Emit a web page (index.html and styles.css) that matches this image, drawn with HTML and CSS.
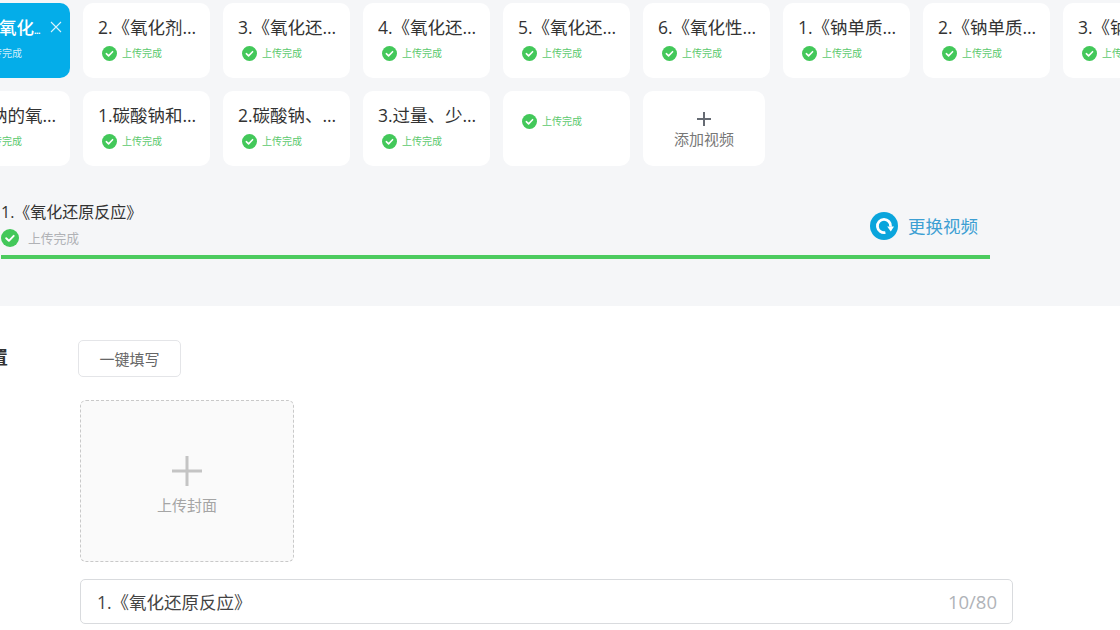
FILE: index.html
```html
<!DOCTYPE html>
<html lang="zh-CN">
<head>
<meta charset="utf-8">
<title>上传视频</title>
<link rel="stylesheet" href="styles.css">
</head>
<body>
<svg class="defs" width="0" height="0" aria-hidden="true">
  <symbol id="ok" viewBox="0 0 16 16">
    <circle cx="8" cy="8" r="8" fill="#43c85a"/>
    <path d="M4.6 8.2l2.4 2.3 4.3-4.4" fill="none" stroke="#fff" stroke-width="1.7" stroke-linecap="round" stroke-linejoin="round"/>
  </symbol>
</svg>
<main class="page">
  <section class="upload-panel">
    <div class="card-grid">
      <div class="card card-active">
        <div class="card-title">1.《氧化<span class="dots">...</span></div>
        <span class="close">
          <svg viewBox="0 0 12 12" width="12" height="12"><path d="M1 1l10 10M11 1L1 11" stroke="#d8f3fd" stroke-width="1.1" fill="none"/></svg>
        </span>
        <div class="card-status"><svg class="ok"><use href="#ok"/></svg><span>上传完成</span></div>
      </div>
      <div class="card"><div class="card-title">2.《氧化剂和还原剂》</div><div class="card-status"><svg class="ok"><use href="#ok"/></svg><span>上传完成</span></div></div>
      <div class="card"><div class="card-title">3.《氧化还原反应的规律》</div><div class="card-status"><svg class="ok"><use href="#ok"/></svg><span>上传完成</span></div></div>
      <div class="card"><div class="card-title">4.《氧化还原反应方程式》</div><div class="card-status"><svg class="ok"><use href="#ok"/></svg><span>上传完成</span></div></div>
      <div class="card"><div class="card-title">5.《氧化还原反应配平》</div><div class="card-status"><svg class="ok"><use href="#ok"/></svg><span>上传完成</span></div></div>
      <div class="card"><div class="card-title">6.《氧化性强弱比较》</div><div class="card-status"><svg class="ok"><use href="#ok"/></svg><span>上传完成</span></div></div>
      <div class="card"><div class="card-title">1.《钠单质的性质》</div><div class="card-status"><svg class="ok"><use href="#ok"/></svg><span>上传完成</span></div></div>
      <div class="card"><div class="card-title">2.《钠单质的反应》</div><div class="card-status"><svg class="ok"><use href="#ok"/></svg><span>上传完成</span></div></div>
      <div class="card"><div class="card-title">3.《钠的化合物》</div><div class="card-status"><svg class="ok"><use href="#ok"/></svg><span>上传完成</span></div></div>
      <div class="card"><div class="card-title">4.《钠的氧化物》</div><div class="card-status"><svg class="ok"><use href="#ok"/></svg><span>上传完成</span></div></div>
      <div class="card"><div class="card-title">1.碳酸钠和碳酸氢钠</div><div class="card-status"><svg class="ok"><use href="#ok"/></svg><span>上传完成</span></div></div>
      <div class="card"><div class="card-title">2.碳酸钠、碳酸氢钠</div><div class="card-status"><svg class="ok"><use href="#ok"/></svg><span>上传完成</span></div></div>
      <div class="card"><div class="card-title">3.过量、少量问题</div><div class="card-status"><svg class="ok"><use href="#ok"/></svg><span>上传完成</span></div></div>
      <div class="card card-blank"><div class="card-status"><svg class="ok"><use href="#ok"/></svg><span>上传完成</span></div></div>
      <div class="card card-add">
        <svg viewBox="0 0 16 16" width="16" height="16"><path d="M8 1v14M1 8h14" stroke="#666b73" stroke-width="2" fill="none"/></svg>
        <span>添加视频</span>
      </div>
    </div>
    <div class="current">
      <div class="current-row">
        <div class="current-info">
          <div class="current-title">1.《氧化还原反应》</div>
          <div class="current-status"><svg class="ok-big"><use href="#ok"/></svg><span>上传完成</span></div>
        </div>
        <div class="replace">
          <svg viewBox="0 0 28 28" width="28" height="28">
            <circle cx="14" cy="14" r="14" fill="#0aa5dc"/>
            <path d="M15.4 20.5A6.6 6.6 0 1 1 20.6 14.6" fill="none" stroke="#fff" stroke-width="2.8"/>
            <path d="M17.2 14.4h6.8l-3.2 5.2z" fill="#fff"/>
          </svg>
          <span>更换视频</span>
        </div>
      </div>
      <div class="bar"></div>
    </div>
  </section>
  <section class="settings">
    <div class="settings-head">
      <h2 class="settings-label">视频设置</h2>
      <button class="fill-btn" type="button">一键填写</button>
    </div>
    <div class="cover">
      <svg viewBox="0 0 30 30" width="30" height="30"><path d="M15 0v30M0 15h30" stroke="#c4c4c4" stroke-width="3" fill="none"/></svg>
      <span>上传封面</span>
    </div>
    <div class="title-input">
      <span class="title-value">1.《氧化还原反应》</span>
      <span class="title-count">10/80</span>
    </div>
  </section>
</main>
</body>
</html>
```
FILE: styles.css
```css
* { box-sizing: border-box; }
html, body { margin: 0; height: 630px; overflow: hidden; background: #fff; }
body { font-family: "Open Sans", "Noto Sans CJK SC", sans-serif; color: #333; }
.defs { position: absolute; }
.page { width: 1400px; margin-left: -64px; }

.upload-panel { height: 306px; background: #f5f6f8; padding: 3px 0 0 7px; }
.card-grid { display: grid; grid-template-columns: repeat(9, 127px); grid-auto-rows: 75px; gap: 13px; }
.card { position: relative; background: #fff; border-radius: 10px; padding: 13px 12px 0 15px; }
.card-title { font-size: 17.5px; line-height: 22px; color: #333; white-space: nowrap; overflow: hidden; text-overflow: ellipsis; }
.card-status { display: flex; align-items: center; gap: 5px; margin: 7px 0 0 4px; font-size: 10px; line-height: 16px; color: #5cc96e; }
.ok { width: 15px; height: 15px; flex: none; }
.card-active { background: #04ade9; }
.card-active .card-title { color: #fff; font-weight: 500; padding-left: 9px; }
.card-active .card-status { color: #cfeefb; }
.dots { font-size: 9px; font-weight: 700; line-height: 0; letter-spacing: -.6px; }
.close { position: absolute; top: 18px; right: 8px; line-height: 0; }
.card-blank { padding-top: 22px; }
.card-blank .card-status { margin-top: 0; }
.card-add { display: flex; flex-direction: column; align-items: center; width: 122px; padding: 20px 0 0; color: #777; font-size: 15px; line-height: 22px; }
.card-add span { margin-top: 1px; }

.current { width: 989px; margin: 35px 0 0 58px; }
.current-row { display: flex; justify-content: space-between; align-items: center; padding-right: 12px; }
.current-title { font-size: 16px; line-height: 22px; color: #333; }
.current-status { display: flex; align-items: center; gap: 9px; margin-top: 6px; font-size: 12.75px; line-height: 18px; color: #b0b2b6; }
.ok-big { width: 18px; height: 18px; flex: none; }
.replace { display: flex; align-items: center; gap: 10px; padding-top: 4px; font-size: 17.5px; line-height: 28px; color: #3d9fd3; }
.bar { height: 4px; margin-top: 8px; background: #4ccb5f; }

.settings { padding: 34px 0 0 144px; position: relative; }
.settings-head { display: flex; align-items: center; height: 37px; margin-left: -144px; }
.settings-label { width: 142px; margin: 0; padding-bottom: 6px; font-size: 18px; font-weight: 700; color: #333; }
.fill-btn { width: 103px; height: 37px; padding: 0; background: #fff; border: 1px solid #e4e5e8; border-radius: 5px; font: 15px "Noto Sans CJK SC", sans-serif; color: #666; }
.cover { display: flex; flex-direction: column; align-items: center; width: 214px; height: 162px; margin-top: 23px; padding-top: 55px; background: #fafafa; border: 1px dashed #c9c9c9; border-radius: 6px; color: #a5a5a5; font-size: 15px; line-height: 20px; }
.cover span { margin-top: 9px; }
.title-input { display: flex; justify-content: space-between; align-items: center; width: 933px; height: 45px; margin-top: 17px; padding: 0 15px 0 16px; border: 1px solid #d9dbde; border-radius: 5px; }
.title-value { font-size: 17.5px; color: #444; }
.title-count { font-size: 18.5px; color: #b0b3b8; }
```
